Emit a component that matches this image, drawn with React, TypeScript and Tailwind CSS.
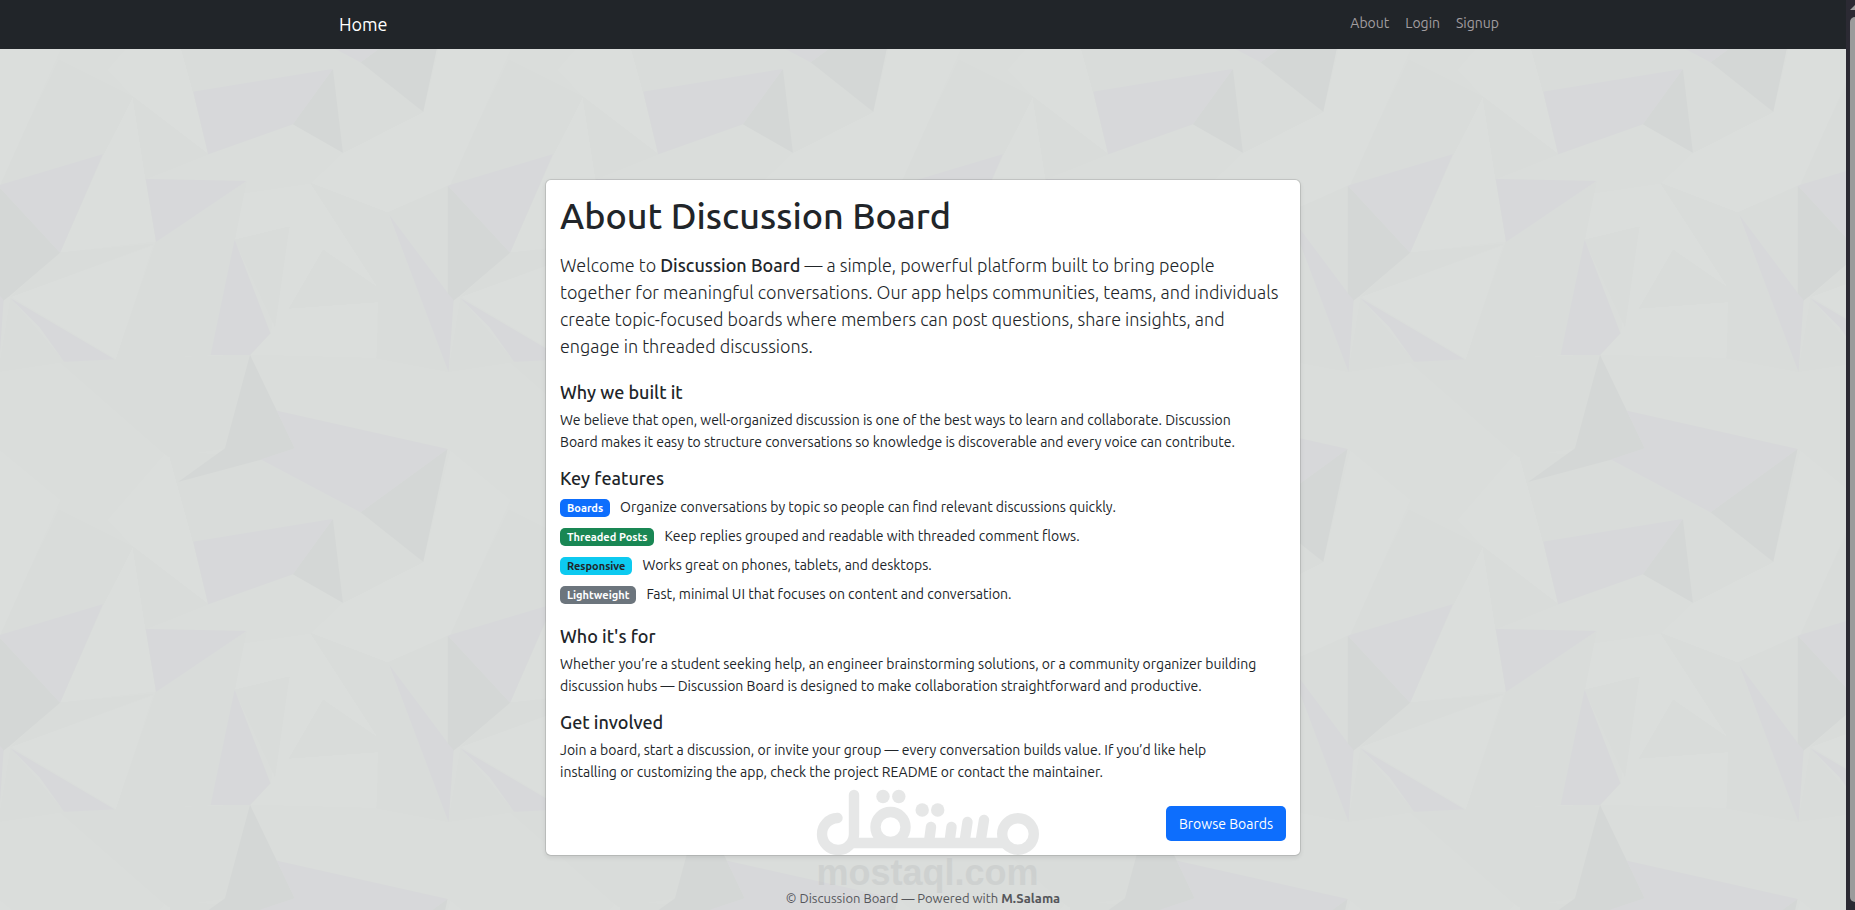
import React from "react";

type Shape = [fill: string, points: string];

const LIGHT = "#dbdedc";
const MID = "#d9dcda";
const DARK = "#d4d7d6";
const LILAC = "#d7d8da";

/* Facets of one 450px background tile, in a 1260 x 1350 grid. */
const FACETS: Shape[] = [
  [LIGHT, "1260,0 1430,150 1260,557 1085,638 870,550 960,458 1185,335"],
  [LIGHT, "470,0 541,275 583,463 372,290 300,210"],
  [LIGHT, "290,463 372,290 408,537 437,725 168,758"],
  [LIGHT, "30,890 430,735 325,1078"],
  [LIGHT, "870,550 1060,865 905,750 810,925 1062,905 1055,1075 700,1065 757,1000 810,680 657,720 680,580"],
  [MID, "372,290 583,463 408,537"],
  [MID, "541,275 470,0 735,28 1010,187 932,207"],
  [MID, "168,758 430,732 30,890"],
  [MID, "437,725 690,545 657,720 590,1065 325,1078"],
  [MID, "870,550 1085,638 1256,1115 1055,1075 1060,865"],
  [MID, "168,1087 325,1078 700,1065 630,1345 470,1370"],
  [MID, "1085,638 1254,557 1254,880"],
  [MID, "1256,1115 1290,895 1440,1085"],
  [MID, "657,720 810,680 770,980"],
  [MID, "905,750 1060,865 1062,905 810,925"],
  [MID, "932,207 1010,187 1185,335 960,458"],
  [MID, "165,180 -6,557 290,463 372,290"],
  [DARK, "700,1065 630,1345 500,1445 735,1378 825,1345 775,1232"],
  [DARK, "1253,1347 1010,1537 1185,1685"],
  [DARK, "932,207 960,458 820,373"],
  [DARK, "1254,557 1254,915 1290,885 1428,758"],
  [LILAC, "775,1232 1253,1347 1010,1537 730,1378 825,1345"],
  [LILAC, "541,275 932,207 820,373 583,463"],
  [LILAC, "1254,557 1548,463 1428,758"],
  [LILAC, "408,537 690,543 437,725"],
  [LILAC, "1090,645 1254,880 1270,900 1256,1115"],
  [LILAC, "1290,895 1580,1078 1440,1085 1370,980"],
  [LILAC, "657,720 757,1000 700,1065 590,1065"],
];

const TILE_SHIFTS = ["translate(0 0)", "translate(-1260 0)", "translate(0 -1350)", "translate(-1260 -1350)"];

function Backdrop() {
  return (
    <svg className="absolute inset-0 h-full w-full" aria-hidden="true">
      <defs>
        <pattern
          id="facets"
          width="450"
          height="450"
          patternUnits="userSpaceOnUse"
          viewBox="0 0 1260 1350"
          preserveAspectRatio="none"
        >
          <rect width="1260" height="1350" fill="#dadddb" />
          {TILE_SHIFTS.map((shift) => (
            <g key={shift} transform={shift}>
              {FACETS.map(([fill, points]) => (
                <polygon key={points} fill={fill} points={points} />
              ))}
            </g>
          ))}
        </pattern>
      </defs>
      <rect width="100%" height="100%" fill="url(#facets)" />
    </svg>
  );
}

function Watermark() {
  return (
    <div className="pointer-events-none absolute top-[789px] left-1/2 flex -translate-x-1/2 flex-col items-center opacity-35">
      <svg width="223" height="67" viewBox="0 0 223 67" role="img" aria-label="مستقل">
        <g fill="none" stroke="#b9bcbc" strokeWidth="10.4" strokeLinecap="round">
          <path d="M21 29A16 16 0 1 0 37.5 45V6" />
          <path d="M37 54H188" strokeLinecap="butt" />
          <circle cx="74" cy="38" r="15" />
          <circle cx="201.500" cy="45" r="15.800" />
          <path d="M114.500 38L112.500 53M135 38L133 53M151 33L148 53M167.500 31L164 53" />
        </g>
        <g fill="#b9bcbc">
          <circle cx="66.500" cy="7.500" r="6.700" />
          <circle cx="82.300" cy="7.500" r="6.700" />
          <circle cx="105.700" cy="21" r="6.700" />
          <circle cx="121.200" cy="21" r="6.700" />
        </g>
      </svg>
      <span className="font-['Liberation_Sans',Arial,sans-serif] text-[36px] leading-[34px] font-bold text-[#b9bcbc]">
        mostaql.com
      </span>
    </div>
  );
}

function Section({ title, children }: { title: string; children: React.ReactNode }) {
  return (
    <section className="mb-3.5">
      <h2 className="mb-1.5 text-[18px] leading-[22px] font-medium">{title}</h2>
      <p className="pr-6">{children}</p>
    </section>
  );
}

const FEATURES = [
  { name: "Boards", badge: "bg-[#0d6efd] text-white", text: "Organize conversations by topic so people can find relevant discussions quickly." },
  { name: "Threaded Posts", badge: "bg-[#198754] text-white", text: "Keep replies grouped and readable with threaded comment flows." },
  { name: "Responsive", badge: "bg-[#0dcaf0] text-[#212529]", text: "Works great on phones, tablets, and desktops." },
  { name: "Lightweight", badge: "bg-[#6c757d] text-white", text: "Fast, minimal UI that focuses on content and conversation." },
];

function ScrollBar() {
  return (
    <div className="flex w-[9px] shrink-0 flex-col overflow-hidden bg-[#2b2a33] pl-1" aria-hidden="true">
      <svg className="mt-1 shrink-0" width="5" height="6" viewBox="0 0 5 6">
        <path d="M0 6L5 1V6Z" fill="#a0a0a0" />
      </svg>
      <div className="mt-[7px] mb-2 flex-1 rounded-l-[5px] bg-[#9b9b9b]" />
    </div>
  );
}

export default function App() {
  return (
    <div className="relative flex min-h-screen overflow-hidden font-[Ubuntu,'Noto_Sans',sans-serif] text-[14px] leading-[22px] text-[#212529]">
      <div className="relative flex min-w-0 flex-1 flex-col">
        <Backdrop />
        <header className="relative bg-[#212529]">
          <nav className="mx-auto flex h-[49px] max-w-[1188px] items-center justify-between px-2.5">
            <a href="#home" className="text-[18px] leading-[27px] text-white">
              Home
            </a>
            <div className="flex gap-4 pr-2 pb-[3px] text-[#a29da0]">
              <a href="#about">About</a>
              <a href="#login">Login</a>
              <a href="#signup">Signup</a>
            </div>
          </nav>
        </header>

        <main className="relative mx-auto mt-[130px] w-full max-w-[756px] rounded-md border border-black/10 bg-white bg-clip-padding p-3.5 shadow-[0_2px_4px_rgba(0,0,0,0.075)]">
          <h1 className="mb-[15px] text-[36px] leading-[43px] font-medium">About Discussion Board</h1>
          <p className="mb-[21px] text-[18px] leading-[27px] font-light">
            Welcome to <strong className="font-medium">Discussion Board</strong> — a simple, powerful platform built to
            bring people together for meaningful conversations. Our app helps communities, teams, and individuals create
            topic-focused boards where members can post questions, share insights, and engage in threaded discussions.
          </p>

          <Section title="Why we built it">
            We believe that open, well-organized discussion is one of the best ways to learn and collaborate. Discussion
            Board makes it easy to structure conversations so knowledge is discoverable and every voice can contribute.
          </Section>

          <section className="mb-5">
            <h2 className="mb-[7px] text-[18px] leading-[22px] font-medium">Key features</h2>
            <ul className="flex flex-col gap-[7px]">
              {FEATURES.map((f) => (
                <li key={f.name} className="flex items-start gap-2.5">
                  <span className={`mt-[3px] rounded-[5px] px-[7px] text-[11px] leading-[18px] font-bold ${f.badge}`}>
                    {f.name}
                  </span>
                  <span>{f.text}</span>
                </li>
              ))}
            </ul>
          </section>

          <Section title="Who it's for">
            Whether you’re a student seeking help, an engineer brainstorming solutions, or a community organizer
            building discussion hubs — Discussion Board is designed to make collaboration straightforward and
            productive.
          </Section>

          <Section title="Get involved">
            Join a board, start a discussion, or invite your group — every conversation builds value. If you’d like help
            installing or customizing the app, check the project README or contact the maintainer.
          </Section>

          <div className="mt-[23px] flex justify-end">
            <button type="button" className="h-[35px] rounded-[5px] bg-[#0d6efd] px-[13px] text-white">
              Browse Boards
            </button>
          </div>
        </main>

        <footer className="relative mt-8 text-center text-[13px] leading-[20px] text-[#55565a]">
          © Discussion Board — Powered with <strong className="font-bold">M.Salama</strong>
        </footer>
      </div>
      <ScrollBar />
      <Watermark />
    </div>
  );
}
